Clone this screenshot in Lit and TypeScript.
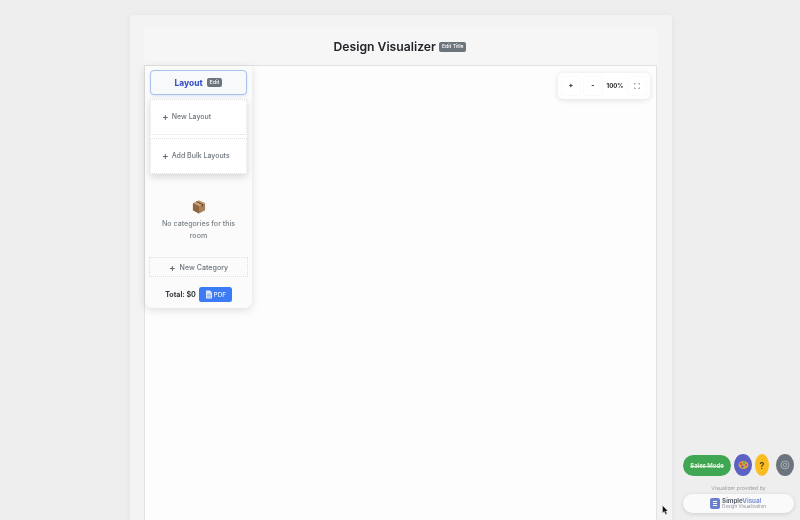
import { LitElement, html, css } from "lit";
import { customElement } from "lit/decorators.js";

@customElement("app-root")
export class AppRoot extends LitElement {
  static styles = css`
    :host { display: block; width: 800px; height: 520px; overflow: hidden; position: relative; background: #eeeeee; font-family: Inter, "Noto Sans", sans-serif; color: #212529; }
    * { box-sizing: border-box; }
    .page { position: absolute; left: 130px; top: 15px; width: 542px; height: 520px; background: #f3f3f3; padding: 13px 15px 0 14px; box-shadow: 0 1px 6px rgba(0,0,0,.06); border-radius: 4px 4px 0 0; display: flex; flex-direction: column; will-change: transform; }
    .head { height: 37px; flex: none; background: #f6f6f6; display: flex; align-items: center; justify-content: center; gap: 3px; padding-top: 1px; padding-right: 1px; }
    h1 { margin: 0; font-size: 12.2px; font-weight: 600; color: #212529; line-height: 1; }
    .badge { background: #6c757d; color: #fff; border-radius: 2px; font-size: 5.2px; font-weight: 500; line-height: 1; padding: 2px 3px; display: inline-block; }
    .canvas { flex: 1; background: #fdfdfd; border: 1px solid #e2e2e2; border-bottom: none; position: relative; }
    .side { position: absolute; left: 0; top: 0; width: 107px; height: 242px; background: #fbfbfb; border-radius: 0 0 7px 7px; box-shadow: 0 2px 8px rgba(0,0,0,.13); padding: 4px 5px 0; display: flex; flex-direction: column; align-items: stretch; }
    .layout { height: 25px; flex: none; border: 1px solid #a9c1ea; border-radius: 4px; background: #f8f9fa; display: flex; align-items: center; justify-content: center; gap: 4px; box-shadow: 0 1px 3px rgba(13,110,253,.15); }
    .layout b { font-size: 8.3px; font-weight: 800; color: #3c57c8; }
    .layout .badge { padding: 2px 3px; font-size: 5.4px; }
    .menu { margin-top: 4px; background: #fff; box-shadow: 0 3px 7px rgba(0,0,0,.14); display: flex; flex-direction: column; gap: 3px; }
    .opt { height: 36px; border: 1px dotted #e2e2e2; display: flex; align-items: center; gap: 3px; padding-left: 11px; padding-bottom: 1px; font-size: 7px; font-weight: 500; color: #6c757d; background: #fff; }
    .plus { font-size: 10px; color: #5f666d; line-height: 1; margin-bottom: 1px; }
    .empty { display: flex; flex-direction: column; align-items: center; margin-top: 26px; font-size: 7.1px; font-weight: 500; color: #7c8389; text-align: center; }
    .box { display: block; margin-bottom: 4px; }
    .empty p { margin: 0; width: 80px; line-height: 12px; }
    .newcat { margin: 15px -1px 0; height: 20px; flex: none; border: 1px dotted #dedede; display: flex; align-items: center; justify-content: center; gap: 4px; font-size: 7.1px; font-weight: 500; color: #6c757d; }
    .total { display: flex; align-items: center; justify-content: center; gap: 3px; margin-top: 10px; font-size: 7.1px; font-weight: 700; color: #343a40; }
    .pdf { width: 33px; height: 15px; background: #3b7cf6; color: #e8f0ff; border-radius: 2.5px; font-size: 6.4px; font-weight: 500; display: flex; align-items: center; justify-content: center; gap: 1px; }
    .zoom { position: absolute; right: 6px; top: 7px; width: 92px; height: 26px; padding-bottom: 1px; background: #fff; border-radius: 5px; box-shadow: 0 1px 6px rgba(0,0,0,.12); display: flex; align-items: center; justify-content: center; gap: 2px; }
    .z { width: 20px; height: 20px; display: flex; align-items: center; justify-content: center; font-size: 7px; font-weight: 700; color: #222; border-radius: 3px; border: 1px solid #fafafa; }
    .z.pct { font-size: 6px; font-weight: 700; border: none; }
    .tools { position: absolute; left: 683px; top: 454px; width: 111px; display: flex; align-items: center; will-change: transform; }
    .sales { width: 48px; height: 21px; border-radius: 11px; background: #3fa653; color: #dcefd9; font-size: 5.9px; font-weight: 700; display: flex; align-items: center; justify-content: center; text-decoration: line-through; }
    .palette { width: 18px; height: 22px; border-radius: 50%; background: #5b62c4; margin-left: 3px; display: flex; align-items: center; justify-content: center; }
    .help { width: 14px; height: 22px; border-radius: 50%; background: #fbbc22; margin-left: 3px; color: #4b3b10; font-size: 9px; font-weight: 600; display: flex; align-items: center; justify-content: center; }
    .gear { width: 18px; height: 22px; border-radius: 50%; background: #6c757d; margin-left: 7px; display: flex; align-items: center; justify-content: center; }
    .prov { position: absolute; left: 683px; top: 484px; width: 111px; text-align: center; font-size: 5.2px; color: #9a9fa5; line-height: 8px; will-change: transform; }
    .brand { position: absolute; left: 683px; top: 494px; width: 111px; height: 19px; background: #fafafa; border-radius: 10px; box-shadow: 0 1px 4px rgba(0,0,0,.14); display: flex; align-items: center; justify-content: center; gap: 2px; padding-right: 1px; will-change: transform; }
    .logo { width: 10px; height: 11px; border-radius: 2px; background: #6b7fcf; display: flex; align-items: center; justify-content: center; }
    .bt { display: flex; flex-direction: column; }
    .bt b { font-size: 6.2px; font-weight: 700; color: #5d6470; line-height: 6.5px; }
    .bt b span { color: #7d8fd6; }
    .bt small { font-size: 4.6px; color: #8a9099; line-height: 5.5px; }
    .cursor { position: absolute; left: 662px; top: 505px; }
  `;

  render() {
    return html`
      <div class="page">
        <div class="head"><h1>Design Visualizer</h1><span class="badge">Edit Title</span></div>
        <div class="canvas">
          <div class="side">
            <div class="layout"><b>Layout</b><span class="badge">Edit</span></div>
            <div class="menu">
              <div class="opt"><span class="plus">+</span>New Layout</div>
              <div class="opt"><span class="plus">+</span>Add Bulk Layouts</div>
            </div>
            <div class="empty">
              <svg class="box" width="14" height="14" viewBox="0 0 15 15">
                <path d="M7.5 .5 14 3.5V11L7.5 14.5 1 11V3.5Z" fill="#a9805a" />
                <path d="M7.5 .5 14 3.5 7.5 6.8 1 3.5Z" fill="#c9a27c" />
                <path d="M7.5 6.8V14.5L1 11V3.5Z" fill="#8f6440" />
                <path d="M4 2 10.5 5.2V7.5L11.8 7V4.4L5.4 1.3Z" fill="#6e4a2c" />
              </svg>
              <p>No categories for this room</p>
            </div>
            <div class="newcat"><span class="plus">+</span>New Category</div>
            <div class="total">
              <span>Total: $0</span>
              <span class="pdf">
                <svg width="8" height="9" viewBox="0 0 8 9"><path d="M1 .5H5L7 2.5V8.5H1Z" fill="#dfe8fa" /><path d="M2 4H6M2 5.5H6M2 7H6" stroke="#7f9fe0" stroke-width=".7" /></svg>PDF
              </span>
            </div>
          </div>
          <div class="zoom">
            <div class="z">+</div>
            <div class="z">-</div>
            <div class="z pct">100%</div>
            <div class="z">
              <svg width="6" height="6" viewBox="0 0 7 7" fill="none" stroke="#777" stroke-width=".8"><path d="M.5 2V.5H2M5 .5H6.5V2M6.5 5V6.5H5M2 6.5H.5V5" /></svg>
            </div>
          </div>
        </div>
      </div>
      <div class="tools">
        <div class="sales">Sales Mode</div>
        <div class="palette">
          <svg width="11" height="10" viewBox="0 0 11 10"><ellipse cx="5.5" cy="5" rx="5" ry="4" fill="#d9a23a" /><circle cx="3" cy="4" r="1" fill="#d33" /><circle cx="6" cy="3" r="1" fill="#3a7" /><circle cx="8" cy="5" r="1" fill="#c3c" /><circle cx="4.5" cy="6.5" r="1" fill="#34c" /></svg>
        </div>
        <div class="help">?</div>
        <div class="gear">
          <svg width="10" height="10" viewBox="0 0 10 10" fill="none" stroke="#a5adb4" stroke-width="1"><circle cx="5" cy="5" r="4" /><circle cx="5" cy="5" r="1.8" /></svg>
        </div>
      </div>
      <div class="prov">Visualizer provided by</div>
      <div class="brand">
        <div class="logo"><svg width="6" height="7" viewBox="0 0 6 7"><path d="M1 1.5H5M1 3.5H5M1 5.5H5" stroke="#fff" stroke-width="1" /></svg></div>
        <div class="bt"><b>Simple<span>Visual</span></b><small>Design Visualization</small></div>
      </div>
      <svg class="cursor" width="7" height="10" viewBox="0 0 7 10"><path d="M.5 .5V8L2.3 6.4 3.6 9.4 5 8.8 3.7 6H6Z" fill="#111" stroke="#eee" stroke-width=".4" /></svg>
    `;
  }
}
